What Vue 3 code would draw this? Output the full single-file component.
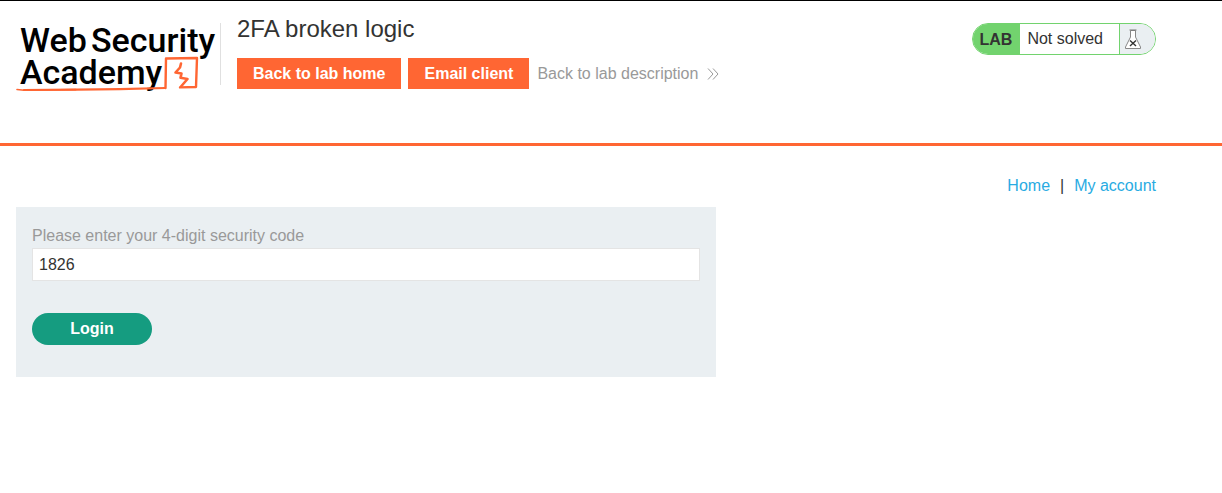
<script setup>
import { ref } from 'vue'

const code = ref('1826')
</script>

<template>
  <div class="page">
    <header class="banner">
      <a class="logo" href="#" aria-label="Web Security Academy">
        <svg width="204" height="76" viewBox="0 0 204 76">
          <g class="wordmark">
            <text x="4" y="33">Web</text>
            <text x="75" y="33">Security</text>
            <text x="4" y="65">Academy</text>
          </g>
          <g fill="none" stroke="#ff6633" stroke-linejoin="round" stroke-linecap="round">
            <path stroke-width="1.6" d="M1 70.5 L8 71.2 L60 70.6" />
            <path stroke-width="2.2" d="M8 71 L60 70.6 L104 70.2 L149 69" />
            <path stroke-width="2.4" d="M149.5 69 L150 39.5 L181 39 L180 68 L164 68.4" />
            <path stroke-width="2.6" d="M165 44.5 L164 48.5 L159.5 53.5 L165.5 54.5 L164.5 58.8 L171.5 60 L165 67.5" />
          </g>
        </svg>
      </a>
      <div class="title-area">
        <h2>2FA broken logic</h2>
        <nav class="actions">
          <a class="action" href="#">Back to lab home</a>
          <a class="action" href="#">Email client</a>
          <a class="back" href="#">
            Back to lab description
            <svg width="12" height="12" viewBox="0 0 12 12" fill="none" stroke="#999" stroke-width="1">
              <path d="M1 0.5 L6 6 L1 11.5 M6 0.5 L11 6 L6 11.5" />
            </svg>
          </a>
        </nav>
      </div>
      <div class="status">
        <span class="tag">LAB</span>
        <span class="state">Not solved</span>
        <span class="flask">
          <svg width="18" height="21" viewBox="0 0 18 21">
            <path d="M6.5 1.5 V8 L1.5 18 V19.5 H16.5 V18 L11.5 8 V1.5 Z" fill="#fff" stroke="#888" />
            <path d="M5.5 1 H12.5" stroke="#777" stroke-width="1" fill="none" />
            <path d="M6 11.5 L12 17 M12 11.5 L6 17" stroke="#333" stroke-width="1.4" fill="none" />
          </svg>
        </span>
      </div>
    </header>

    <main>
      <nav class="links">
        <a href="#">Home</a>
        <span>|</span>
        <a href="#">My account</a>
      </nav>
      <form class="login" @submit.prevent>
        <label for="mfa-code">Please enter your 4-digit security code</label>
        <input id="mfa-code" v-model="code" type="text" />
        <button type="submit">Login</button>
      </form>
    </main>
  </div>
</template>

<style>
body {
  background: #fff;
}
</style>

<style scoped>
.page {
  border-top: 1px solid #000;
  color: #333332;
  font: 16px/20px "Liberation Sans", Arial, sans-serif;
}

a {
  text-decoration: none;
}

.banner {
  display: flex;
  align-items: flex-start;
  padding: 14px 66px 54px 16px;
  border-bottom: 3px solid #ff6633;
}

.logo {
  display: flex;
  height: 62px;
  margin-top: 8px;
  border-right: 1px solid #e0e0e0;
}

.logo svg {
  flex: none;
  margin-top: -4px;
}

.wordmark {
  fill: #000;
  font-family: Roboto, sans-serif;
  font-size: 34px;
  font-weight: 500;
}

.title-area {
  flex: 1;
  padding-left: 16px;
}

h2 {
  margin: 0 0 15px;
  font-size: 24px;
  font-weight: 400;
  line-height: 28px;
}

.actions {
  display: flex;
  align-items: center;
  gap: 7px;
}

.action {
  padding: 6px 16px 5px;
  background: #ff6633;
  color: #fff;
  font-weight: 700;
}

.back {
  display: flex;
  align-items: center;
  gap: 9px;
  padding-left: 1px;
  color: #999;
}

.status {
  display: flex;
  height: 30px;
  margin-top: 8px;
  overflow: hidden;
  border: 1px solid #72d36e;
  border-radius: 16px;
  line-height: 30px;
}

.tag {
  padding: 0 8px 0 7px;
  background: #72d36e;
  font-weight: 700;
  line-height: 31px;
}

.state {
  padding: 0 16px 0 7px;
  border-right: 1px solid #72d36e;
}

.flask {
  display: flex;
  align-items: center;
  width: 31px;
  padding-left: 4px;
  background: #eaeff2;
}

main {
  padding: 30px 66px 0 16px;
}

.links {
  display: flex;
  justify-content: flex-end;
  gap: 10px;
  margin-bottom: 11px;
}

.links a {
  color: #29abe2;
}

.login {
  display: flex;
  flex-direction: column;
  align-items: flex-start;
  box-sizing: border-box;
  max-width: 700px;
  padding: 19px 16px 32px;
  background: #eaeff2;
}

label {
  margin-bottom: 2px;
  color: #999;
}

input {
  box-sizing: border-box;
  width: 100%;
  height: 33px;
  padding: 0 6px;
  border: 1px solid #e4e4e4;
  background: #fff;
  color: #333332;
  font: inherit;
}

button {
  height: 32px;
  min-width: 120px;
  margin-top: 32px;
  padding: 0 16px 1px;
  border: 0;
  border-radius: 16px;
  background: #159c80;
  color: #fff;
  font: inherit;
  font-weight: 700;
}
</style>
